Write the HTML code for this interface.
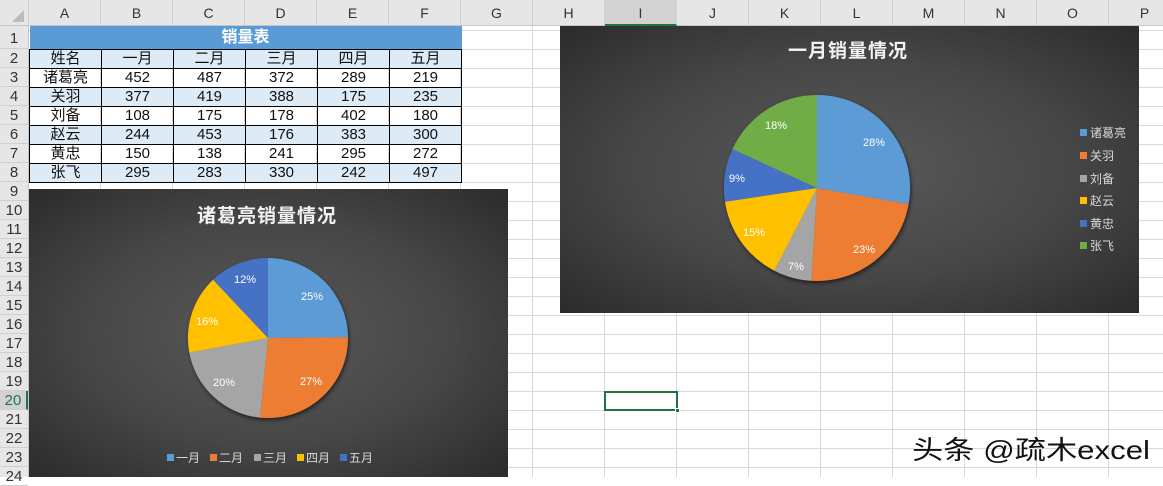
<!DOCTYPE html>
<html><head><meta charset="utf-8"><style>
*{margin:0;padding:0;box-sizing:border-box}
body{width:1163px;height:477px;overflow:hidden;background:#fff;position:relative;font-family:"Liberation Sans","Noto Sans CJK SC",sans-serif;}
.abs{position:absolute}
#grid{left:29px;top:26px;width:1134px;height:451px;
background-image:repeating-linear-gradient(to right,transparent 0 71px,#d9d9d9 71px 72px),repeating-linear-gradient(to bottom,#d9d9d9 0 1px,transparent 1px 19px);
background-position:0 0,0 4px;}
#colhdr{left:0;top:0;width:1163px;height:26px;background:#e6e6e6;border-bottom:1px solid #c6c6c6}
.ch{position:absolute;top:0;height:25px;width:72px;text-align:center;line-height:26px;font-size:14px;color:#333;border-right:1px solid #cfcfcf}
#rowhdr{left:0;top:26px;width:29px;height:451px;background:#e6e6e6;border-right:1px solid #c6c6c6}
.rh{position:absolute;left:0;width:28px;text-align:center;font-size:15px;color:#333;border-bottom:1px solid #cfcfcf}
table{position:absolute;left:29px;top:26px;border-collapse:collapse;font-size:15px;color:#111;font-family:"Liberation Sans","Noto Sans CJK SC",sans-serif}
td{width:72px;height:19px;border:1px solid #000;text-align:center;padding:0;line-height:17px}
tr.t td{height:23px;background:#5b9bd5;color:#fff;font-weight:bold;font-size:16px;border:none}
tr.b td{background:#ddebf7}
.chart{position:absolute;background:radial-gradient(ellipse at center,#5a5a5a 0%,#464646 55%,#2b2b2b 100%)}
svg text{font-family:"Liberation Sans","Noto Sans CJK SC",sans-serif}
</style></head><body>
<div id="grid" class="abs"></div>
<div id="colhdr" class="abs">
<div class="ch" style="left:0;width:29px;border-right:1px solid #cfcfcf"><svg width="29" height="26"><polygon points="24,10 24,22 12,22" fill="#bcbcbc"/></svg></div>
<div class="ch" style="left:29px">A</div><div class="ch" style="left:101px">B</div><div class="ch" style="left:173px">C</div><div class="ch" style="left:245px">D</div><div class="ch" style="left:317px">E</div><div class="ch" style="left:389px">F</div><div class="ch" style="left:461px">G</div><div class="ch" style="left:533px">H</div><div class="ch" style="left:605px;background:#d2d2d2;border-bottom:2px solid #217346;height:26px">I</div><div class="ch" style="left:677px">J</div><div class="ch" style="left:749px">K</div><div class="ch" style="left:821px">L</div><div class="ch" style="left:893px">M</div><div class="ch" style="left:965px">N</div><div class="ch" style="left:1037px">O</div><div class="ch" style="left:1109px">P</div>
</div>
<div id="rowhdr" class="abs">
<div class="rh" style="top:0;height:23px;line-height:26px">1</div>
<div class="rh" style="top:23px;height:19px;line-height:19px">2</div><div class="rh" style="top:42px;height:19px;line-height:19px">3</div><div class="rh" style="top:61px;height:19px;line-height:19px">4</div><div class="rh" style="top:80px;height:19px;line-height:19px">5</div><div class="rh" style="top:99px;height:19px;line-height:19px">6</div><div class="rh" style="top:118px;height:19px;line-height:19px">7</div><div class="rh" style="top:137px;height:19px;line-height:19px">8</div><div class="rh" style="top:156px;height:19px;line-height:19px">9</div><div class="rh" style="top:175px;height:19px;line-height:19px">10</div><div class="rh" style="top:194px;height:19px;line-height:19px">11</div><div class="rh" style="top:213px;height:19px;line-height:19px">12</div><div class="rh" style="top:232px;height:19px;line-height:19px">13</div><div class="rh" style="top:251px;height:19px;line-height:19px">14</div><div class="rh" style="top:270px;height:19px;line-height:19px">15</div><div class="rh" style="top:289px;height:19px;line-height:19px">16</div><div class="rh" style="top:308px;height:19px;line-height:19px">17</div><div class="rh" style="top:327px;height:19px;line-height:19px">18</div><div class="rh" style="top:346px;height:19px;line-height:19px">19</div><div class="rh" style="top:365px;height:19px;line-height:19px;background:#d2d2d2;color:#217346;border-right:2px solid #217346">20</div><div class="rh" style="top:384px;height:19px;line-height:19px">21</div><div class="rh" style="top:403px;height:19px;line-height:19px">22</div><div class="rh" style="top:422px;height:19px;line-height:19px">23</div><div class="rh" style="top:441px;height:19px;line-height:19px">24</div>
</div>
<table>
<tr class="t"><td colspan="6">销量表</td></tr>
<tr class="b"><td>姓名</td><td>一月</td><td>二月</td><td>三月</td><td>四月</td><td>五月</td></tr>
<tr><td>诸葛亮</td><td>452</td><td>487</td><td>372</td><td>289</td><td>219</td></tr>
<tr class="b"><td>关羽</td><td>377</td><td>419</td><td>388</td><td>175</td><td>235</td></tr>
<tr><td>刘备</td><td>108</td><td>175</td><td>178</td><td>402</td><td>180</td></tr>
<tr class="b"><td>赵云</td><td>244</td><td>453</td><td>176</td><td>383</td><td>300</td></tr>
<tr><td>黄忠</td><td>150</td><td>138</td><td>241</td><td>295</td><td>272</td></tr>
<tr class="b"><td>张飞</td><td>295</td><td>283</td><td>330</td><td>242</td><td>497</td></tr>
</table>
<div class="abs" style="left:604px;top:391px;width:74px;height:20px;border:2px solid #217346"></div>
<div class="abs" style="left:675px;top:408px;width:5px;height:5px;background:#217346;border:1px solid #fff"></div>

<div class="chart" style="left:29px;top:189px;width:479px;height:288px"></div>
<svg class="abs" style="left:0;top:0" width="1163" height="477">
<defs><filter id="sh"><feDropShadow dx="1" dy="2" stdDeviation="2" flood-color="#000" flood-opacity=".6"/></filter></defs>
<g filter="url(#sh)">
<path d="M268,338 L268,258 A80,80 0 0 1 348,337.3 Z" fill="#5b9bd5"/>
<path d="M268,338 L348,337.3 A80,80 0 0 1 259.9,417.6 Z" fill="#ed7d31"/>
<path d="M268,338 L259.9,417.6 A80,80 0 0 1 189.3,352.6 Z" fill="#a5a5a5"/>
<path d="M268,338 L189.3,352.6 A80,80 0 0 1 213.1,279.8 Z" fill="#ffc000"/>
<path d="M268,338 L213.1,279.8 A80,80 0 0 1 268,258 Z" fill="#4472c4"/>
</g>
<g font-size="11" fill="#fff" text-anchor="middle">
<text x="312" y="300">25%</text><text x="311" y="385">27%</text><text x="224" y="386">20%</text><text x="207" y="325">16%</text><text x="245" y="283">12%</text></g>
<text x="267" y="222" font-size="19" font-weight="bold" fill="#f2f2f2" text-anchor="middle" letter-spacing="1">诸葛亮销量情况</text>
<g font-size="12" fill="#d9d9d9">
<rect x="167" y="454" width="7" height="7" fill="#5b9bd5"/><text x="176" y="462">一月</text>
<rect x="210" y="454" width="7" height="7" fill="#ed7d31"/><text x="219" y="462">二月</text>
<rect x="254" y="454" width="7" height="7" fill="#a5a5a5"/><text x="263" y="462">三月</text>
<rect x="297" y="454" width="7" height="7" fill="#ffc000"/><text x="306" y="462">四月</text>
<rect x="340" y="454" width="7" height="7" fill="#4472c4"/><text x="349" y="462">五月</text>
</g>
</svg>

<div class="chart" style="left:560px;top:26px;width:579px;height:287px"></div>
<svg class="abs" style="left:0;top:0" width="1163" height="477">
<defs><filter id="sh2"><feDropShadow dx="1" dy="2" stdDeviation="2" flood-color="#000" flood-opacity=".6"/></filter></defs>
<g filter="url(#sh2)">
<path d="M817,188 L817,95 A93,93 0 0 1 908.6,204.3 Z" fill="#5b9bd5"/>
<path d="M817,188 L908.6,204.3 A93,93 0 0 1 811.3,280.8 Z" fill="#ed7d31"/>
<path d="M817,188 L811.3,280.8 A93,93 0 0 1 774.2,270.6 Z" fill="#a5a5a5"/>
<path d="M817,188 L774.2,270.6 A93,93 0 0 1 725,201.7 Z" fill="#ffc000"/>
<path d="M817,188 L725,201.7 A93,93 0 0 1 732.5,149.1 Z" fill="#4472c4"/>
<path d="M817,188 L732.5,149.1 A93,93 0 0 1 817,95 Z" fill="#70ad47"/>
</g>
<g font-size="11" fill="#fff" text-anchor="middle">
<text x="874" y="146">28%</text><text x="864" y="253">23%</text><text x="796" y="270">7%</text><text x="754" y="236">15%</text><text x="737" y="182">9%</text><text x="776" y="129">18%</text></g>
<text x="848" y="57" font-size="19" font-weight="bold" fill="#f2f2f2" text-anchor="middle" letter-spacing="1">一月销量情况</text>
<g font-size="12" fill="#d9d9d9">
<rect x="1080" y="129" width="7" height="7" fill="#5b9bd5"/><text x="1090" y="137">诸葛亮</text>
<rect x="1080" y="152" width="7" height="7" fill="#ed7d31"/><text x="1090" y="160">关羽</text>
<rect x="1080" y="175" width="7" height="7" fill="#a5a5a5"/><text x="1090" y="183">刘备</text>
<rect x="1080" y="197" width="7" height="7" fill="#ffc000"/><text x="1090" y="205">赵云</text>
<rect x="1080" y="220" width="7" height="7" fill="#4472c4"/><text x="1090" y="228">黄忠</text>
<rect x="1080" y="242" width="7" height="7" fill="#70ad47"/><text x="1090" y="250">张飞</text>
</g>
<text x="912" y="459" font-size="26" fill="#111" stroke="#fff" stroke-width="0.8" paint-order="stroke" textLength="238" lengthAdjust="spacingAndGlyphs">头条 @疏木excel</text>
</svg>
</body></html>
